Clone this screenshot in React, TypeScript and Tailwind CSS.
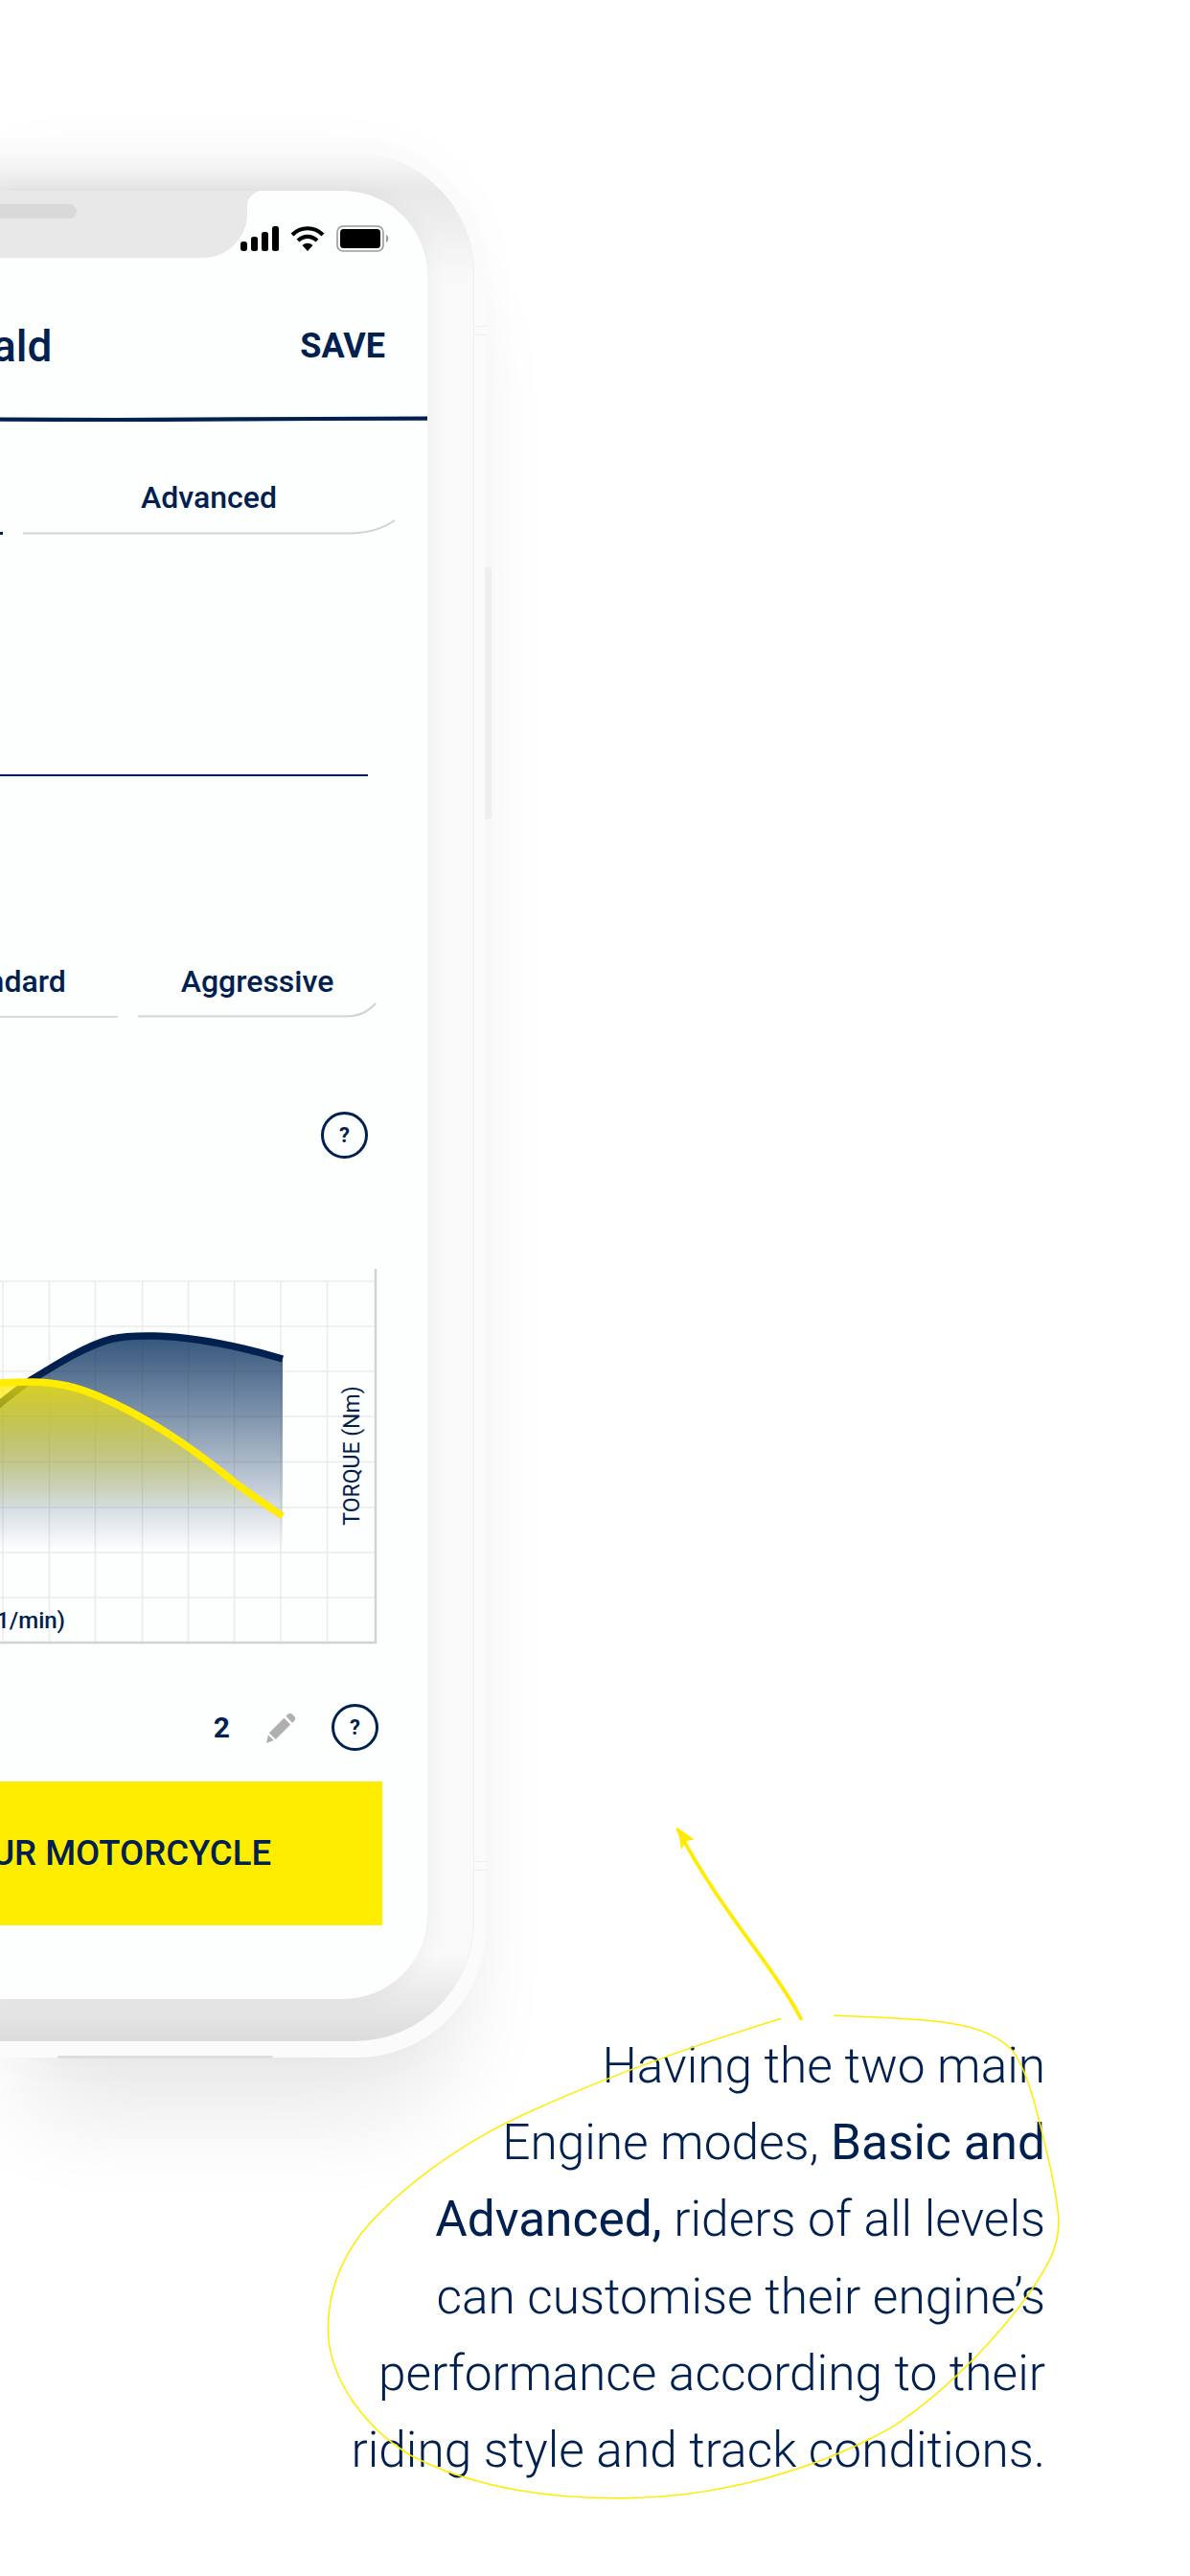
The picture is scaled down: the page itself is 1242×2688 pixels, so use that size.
const HelpIcon = () => (
  <div className="w-[49px] h-[49px] rounded-full border-[3px] border-[#00204f] flex items-center justify-center text-[#00204f] text-[22px] font-bold">
    ?
  </div>
);

const StatusIcons = () => (
  <div className="flex items-center justify-end gap-[12px] h-[30px] pr-[39px]">
    <svg width="40" height="26" viewBox="0 0 40 26" fill="#000">
      <rect x="0" y="16" width="7" height="10" rx="3" />
      <rect x="11" y="11" width="7" height="15" rx="2.5" />
      <rect x="22" y="6" width="7" height="20" rx="2.5" />
      <rect x="33" y="0" width="7" height="26" rx="2.5" />
    </svg>
    <svg width="36" height="26" viewBox="0 0 36 26" fill="none">
      <path d="M2 9 C11 0 25 0 34 9" stroke="#000" strokeWidth="4.2" />
      <path d="M8 15 C14 9.5 22 9.5 28 15" stroke="#000" strokeWidth="4.2" />
      <path d="M12.5 20 C16 17 20 17 23.5 20 L18 26 Z" fill="#000" />
    </svg>
    <svg width="56" height="28" viewBox="0 0 56 28" fill="none">
      <rect x="1" y="1" width="48" height="26" rx="6" stroke="#9a9a9a" strokeWidth="1.6" />
      <rect x="4" y="4" width="42" height="20" rx="3.5" fill="#000" />
      <path d="M52 10 C55 11 55 17 52 18 Z" fill="#9a9a9a" />
    </svg>
  </div>
);

const Chart = () => {
  const navyCurve = "M-40 1496 C-10 1474 10 1455 31 1441 C60 1423 90 1404 117 1397 C135 1393 150 1394 162 1394 C200 1395 240 1402 295 1418";
  const yellowCurve = "M-40 1448 C-20 1444 10 1442 34 1442 C60 1442 85 1449 103 1457 C150 1477 200 1510 245 1547 C265 1562 280 1572 295 1582";
  const rows = [1337, 1384, 1431, 1478, 1525.5, 1573, 1620, 1667];
  const cols = [3, 51.5, 99.5, 148.5, 196.5, 244.5, 293, 341.5];
  return (
    <div className="relative h-[392px]">
      <svg className="absolute left-0 top-0" width="394" height="392" viewBox="0 1324 394 392">
        <defs>
          <linearGradient id="navyFill" gradientUnits="userSpaceOnUse" x1="0" y1="1398" x2="0" y2="1617">
            <stop offset="0" stopColor="#002a5a" stopOpacity="0.78" />
            <stop offset="0.77" stopColor="#002a5a" stopOpacity="0.18" />
            <stop offset="1" stopColor="#002a5a" stopOpacity="0" />
          </linearGradient>
          <linearGradient id="yellowFill" gradientUnits="userSpaceOnUse" x1="0" y1="1445" x2="0" y2="1573">
            <stop offset="0" stopColor="#ffec00" stopOpacity="0.75" />
            <stop offset="1" stopColor="#ffec00" stopOpacity="0.03" />
          </linearGradient>
        </defs>
        {rows.map((y) => (
          <line key={y} x1="0" x2="392" y1={y} y2={y} stroke="#ebebeb" strokeWidth="1.5" />
        ))}
        {cols.map((x) => (
          <line key={x} x1={x} x2={x} y1="1337" y2="1714" stroke="#ebebeb" strokeWidth="1.5" />
        ))}
        <path d={navyCurve + " L295 1617 L-40 1617 Z"} fill="url(#navyFill)" />
        <path d={navyCurve} fill="none" stroke="#00204f" strokeWidth="7.5" />
        <path d={yellowCurve + " L295 1573 L-40 1573 Z"} fill="url(#yellowFill)" />
        <path d={yellowCurve} fill="none" stroke="#ffec00" strokeWidth="7.5" />
        <line x1="392" x2="392" y1="1324" y2="1715" stroke="#d2d2d2" strokeWidth="2.5" />
        <line x1="0" x2="393" y1="1714" y2="1714" stroke="#d2d2d2" strokeWidth="2.5" />
      </svg>
      <div className="absolute right-[378px] top-[353px] whitespace-nowrap text-[24px] leading-[28px] font-medium text-[#00204f]">
        RPM (1/min)
      </div>
      <div className="absolute left-[368px] top-[195px] -translate-x-1/2 -translate-y-1/2 -rotate-90 whitespace-nowrap text-[23px] leading-[26px] font-normal text-[#00204f]">
        TORQUE (Nm)
      </div>
    </div>
  );
};

const App = () => (
  <div className="relative w-[1242px] h-[2688px] overflow-hidden bg-white font-['Roboto',sans-serif]">
    <div className="pt-[147px] flex flex-col">
      {/* phone */}
      <div className="relative w-[507px] h-[2000px] rounded-r-[135px] bg-[#fbfbfb] shadow-[0_90px_100px_-30px_rgba(0,0,0,0.09),0_0_60px_rgba(0,0,0,0.02)]">
        <div className="absolute right-[-6px] top-[445px] w-[7px] h-[263px] rounded-r-[4px] bg-[#eeeeee]" />
        <div className="absolute right-0 top-[193px] w-[13px] h-[10px] border-y border-[#eeeeee]" />
        <div className="absolute right-0 top-[1795px] w-[13px] h-[10px] border-y border-[#eeeeee]" />
        <div className="absolute left-[60px] bottom-[-1px] w-[225px] h-[3px] rounded-b-[4px] bg-[#dedede]" />
        <div className="pt-[13px] pr-[12px] pb-[17px] h-full">
          <div className="h-full pt-[39px] pr-[48px] pb-[44px] rounded-r-[125px] bg-[linear-gradient(180deg,#f9f9f9_0px,#e8e8e8_39px,#f9f9f9_130px,#f9f9f9_1880px,#e9e9e9_1926px,#dcdcdc_1970px)] border-r border-[#f0f0f0]">
            <div className="relative h-full rounded-r-[88px] bg-[#fdfefe] overflow-hidden shadow-[0_0_24px_rgba(0,0,0,0.05)]">
              {/* notch */}
              <div className="absolute left-0 top-0 w-[258px] h-[70px] bg-[#e8e8e8] rounded-br-[46px]">
                <div className="mt-[14px] w-[80px] h-[15px] rounded-r-full bg-[#d9d9d9]" />
              </div>
              <div className="absolute left-[258px] top-0 w-[16px] h-[16px] bg-[#e8e8e8]">
                <div className="w-full h-full rounded-tl-[16px] bg-[#fdfefe]" />
              </div>

              <div className="pt-[35px]">
                <StatusIcons />
              </div>

              {/* header */}
              <div className="mt-[65px] h-[64px] flex items-center justify-between pr-[44px] text-[#00204f]">
                <span className="text-[46px] leading-[64px] font-medium -ml-[8px] whitespace-nowrap">ald</span>
                <span className="text-[36px] leading-[64px] font-bold">SAVE</span>
              </div>
              <svg className="block mt-[41px]" width="447" height="6" viewBox="0 0 447 6">
                <path d="M0 3.6 L120 4.2 L250 3.4 L330 3 L447 2.6" stroke="#00204f" strokeWidth="4.2" fill="none" />
              </svg>

              {/* mode tabs */}
              <div className="mt-[56px] flex justify-end gap-[21px] pr-[34px] text-[#00204f]">
                <div className="self-end w-[3px] h-[3px] bg-[#00204f]" />
                <div className="relative w-[389px] h-[62px] text-center text-[32px] leading-[46px] font-medium">
                  Advanced
                  <svg className="absolute left-0 bottom-0" width="389" height="16" viewBox="0 0 389 16" fill="none">
                    <path d="M0 14.5 L340 14.5 C358 14.5 375 10 388 1" stroke="#d2d2d2" strokeWidth="2" />
                  </svg>
                </div>
              </div>

              <div className="mt-[250px] mr-[62px] h-[2px] bg-[#00204f]" />

              {/* response tabs */}
              <div className="mt-[190px] flex justify-end pr-[53px] gap-[21px] text-[#00204f] text-[32px] font-medium leading-[48px]">
                <div className="relative h-[62px] w-[238px] shrink-0 text-center whitespace-nowrap">
                  Standard
                  <div className="absolute left-0 right-0 bottom-0 h-[2px] bg-[#d9d9d9]" />
                </div>
                <div className="relative h-[62px] w-[249px] shrink-0 text-center">
                  Aggressive
                  <svg className="absolute left-0 bottom-0" width="249" height="16" viewBox="0 0 249 16" fill="none">
                    <path d="M0 14.5 L218 14.5 C230 14.5 240 10 248 1" stroke="#d2d2d2" strokeWidth="2" />
                  </svg>
                </div>
              </div>

              <div className="mt-[98px] flex justify-end pr-[62px]">
                <HelpIcon />
              </div>

              <div className="mt-[115px]">
                <Chart />
              </div>

              {/* map row */}
              <div className="mt-[61px] flex items-center justify-end pr-[51px] h-[50px]">
                <span className="text-[30px] font-bold text-[#00204f]">2</span>
                <svg className="ml-[37px] mr-[36px]" width="33" height="33" viewBox="0 0 34 34">
                  <path d="M24 3 a3.6 3.6 0 0 1 5 0 l2 2 a3.6 3.6 0 0 1 0 5 l-2 2 -7 -7 Z M20 7 l7 7 L11 30 l-7 -7 Z M3 25 l6 6 -8 3 Z" fill="#b0b0b0" />
                </svg>
                <HelpIcon />
              </div>

              {/* call to action */}
              <div className="mt-[32px] mr-[47px] h-[150px] bg-[#ffed00] flex items-center justify-end pr-[116px]">
                <span className="whitespace-nowrap text-[36.5px] font-medium text-[#00204f]">
                  CUSTOMISE YOUR MOTORCYCLE
                </span>
              </div>
            </div>
          </div>
        </div>
      </div>

      {/* caption */}
      <div className="-mt-[31px] pr-[151px] text-right text-[51.4px] leading-[80.2px] font-light text-[#00204f]">
        <p>Having the two main</p>
        <p>
          Engine modes, <span className="font-normal">Basic and</span>
        </p>
        <p>
          <span className="font-normal">Advanced,</span> riders of all levels
        </p>
        <p>can customise their engine’s</p>
        <p>performance according to their</p>
        <p>riding style and track conditions.</p>
      </div>
    </div>

    {/* hand drawn annotation */}
    <svg className="absolute left-0 top-0 pointer-events-none" width="1242" height="2688" viewBox="0 0 725 1568" fill="none">
      <path
        d="M476 1229 C430 1243 375 1262 320 1287 C280 1305 240 1335 220 1360 C205 1380 199 1400 200 1422 C202 1450 222 1478 250 1495 C290 1516 340 1522 385 1521 C440 1520 500 1503 545 1477 C585 1450 625 1405 640 1375 C648 1358 645 1345 640 1320 C634 1295 628 1265 618 1250 C600 1228 560 1230 508 1227"
        stroke="#ffec00"
        strokeWidth="0.9"
      />
      <path d="M488 1229 C470 1195 440 1165 413 1114" stroke="#ffec00" strokeWidth="2.2" strokeLinecap="round" />
      <path d="M413 1113 L415 1126 L418 1121 L423 1120 Z" fill="#ffec00" />
    </svg>
  </div>
);

export default App;
